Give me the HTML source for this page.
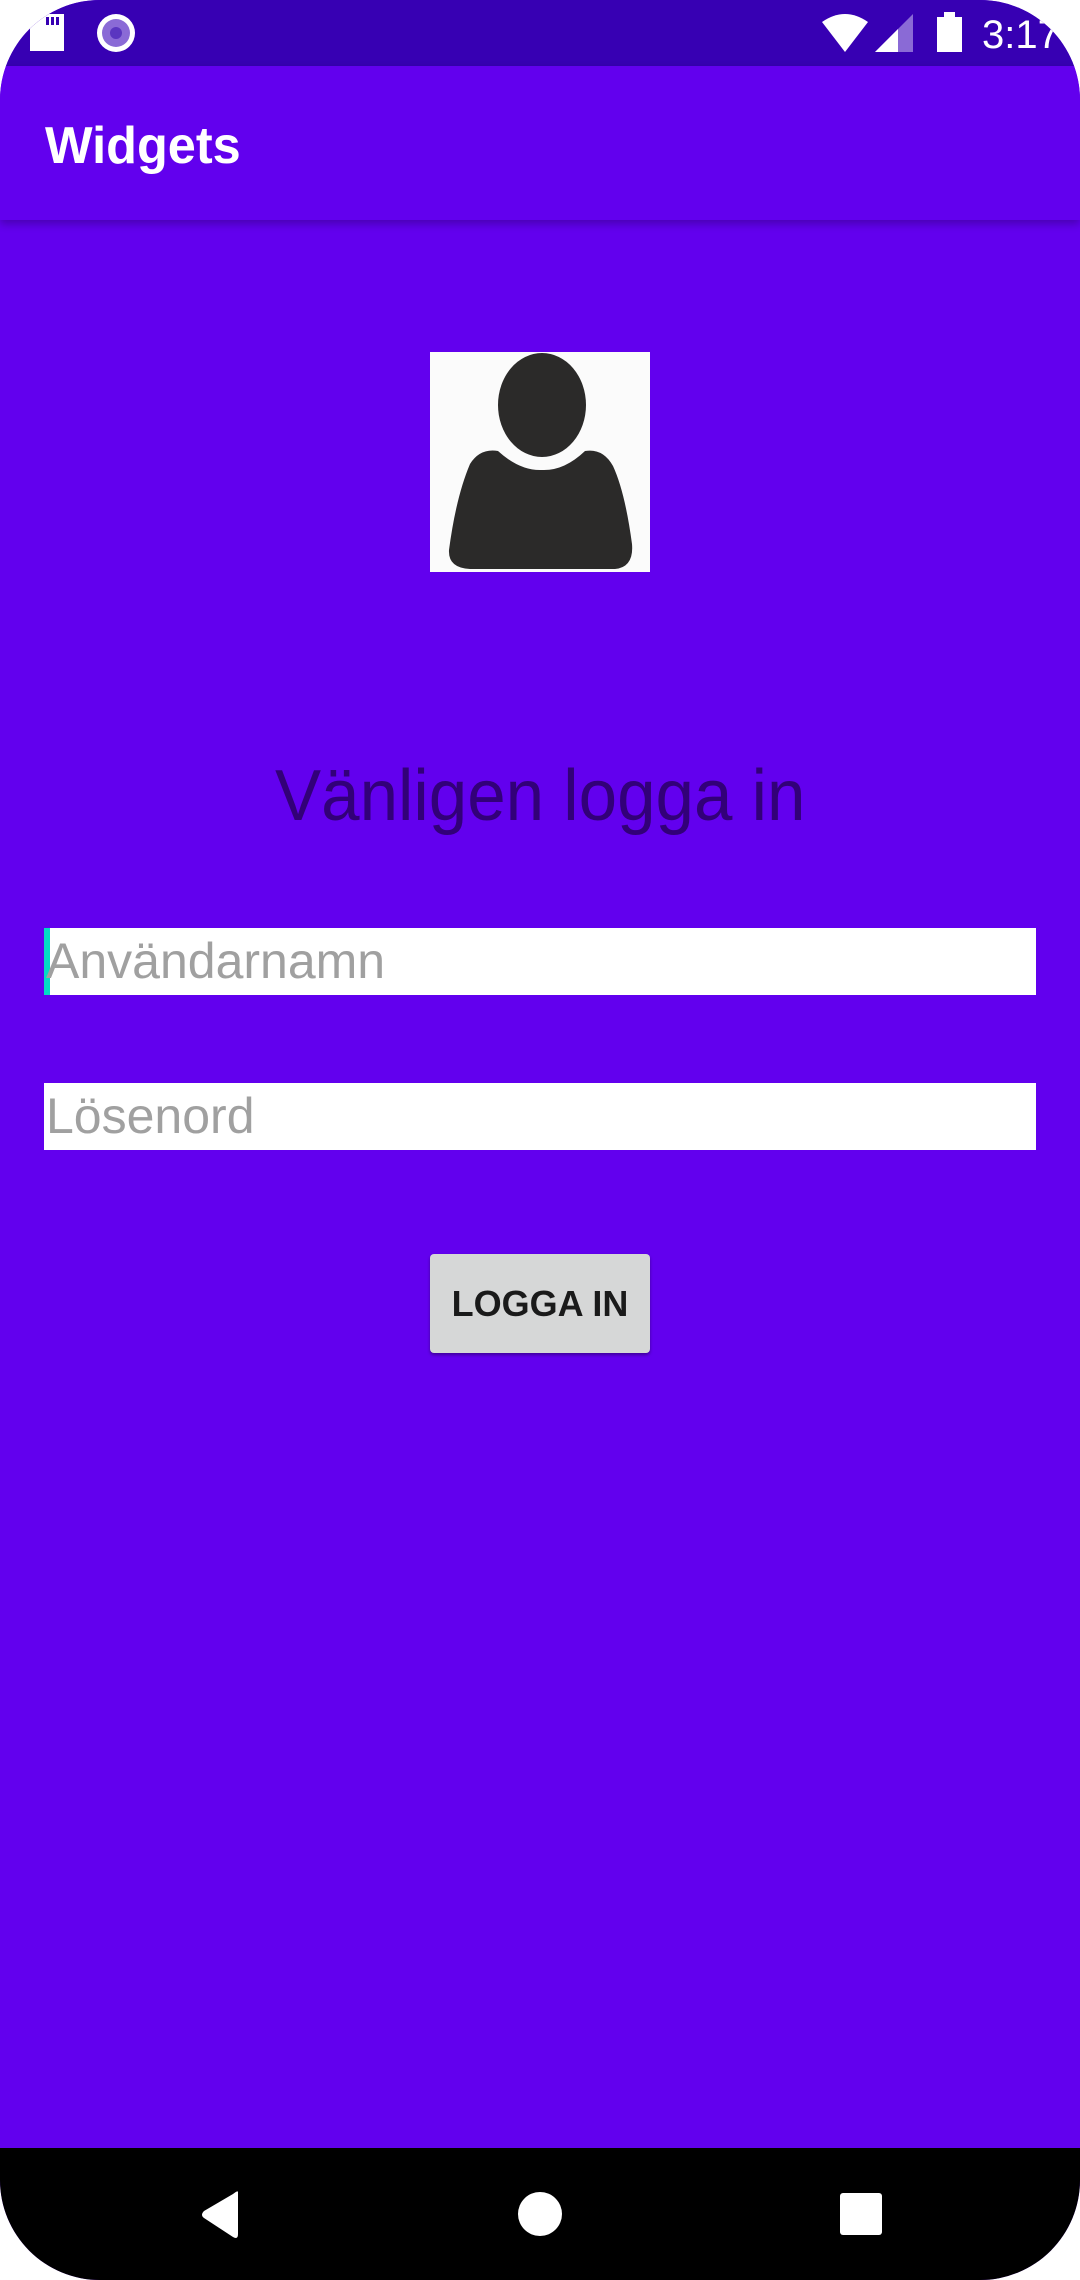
<!DOCTYPE html>
<html><head><meta charset="utf-8"><style>
html,body{margin:0;padding:0;background:#fff;}
body{width:1080px;height:2280px;position:relative;overflow:hidden;font-family:"Liberation Sans",sans-serif;}
.screen{position:absolute;left:0;top:0;width:1080px;height:2280px;border-radius:100px;overflow:hidden;background:#6200EE;}
.status{position:absolute;left:0;top:0;width:1080px;height:66px;background:#3700B3;}
.appbar{position:absolute;left:0;top:66px;width:1080px;height:154px;background:#6200EE;box-shadow:0 4px 8px rgba(0,0,0,0.25);}
.title{position:absolute;left:45px;font-size:52px;color:#fff;font-weight:bold;transform:scaleX(0.97);transform-origin:left;}
.avatar{position:absolute;left:430px;top:352px;width:220px;height:220px;background:#fbfbfb;}
.h{position:absolute;left:0;width:1080px;top:755px;text-align:center;font-size:72px;color:#320078;}
.h span{display:inline-block;transform:scaleX(0.96);}
.field{position:absolute;left:44px;width:992px;height:67px;background:#fff;}
.field span{position:absolute;left:2px;top:4px;font-size:50px;color:#a0a0a0;display:inline-block;}
.btn{position:absolute;left:430px;top:1254px;width:220px;height:99px;background:#d6d7d7;border-radius:4px;box-shadow:0 2px 3px rgba(0,0,0,0.35);text-align:center;line-height:99px;font-size:36px;font-weight:bold;color:#1a1a1a;}
.nav{position:absolute;left:0;top:2148px;width:1080px;height:132px;background:#000;}
</style></head><body>
<div class="screen">
<div class="status">
 <svg width="1080" height="66" style="position:absolute;left:0;top:0">
  <path d="M36 14 h28 v37 h-34 v-31 z" fill="#fff"/>
  <rect x="46" y="17" width="3" height="8" fill="#3700B3"/><rect x="51" y="17" width="3" height="8" fill="#3700B3"/><rect x="56" y="17" width="3" height="8" fill="#3700B3"/>
  <circle cx="116" cy="33" r="19" fill="#fff"/><circle cx="116" cy="33" r="14" fill="#8a6ad6"/><circle cx="116" cy="33" r="6" fill="#5a36c0"/>
  <path d="M822 22 Q845 6 868 22 L845 52 Z" fill="#fff"/>
  <path d="M875 52 L913 14 V52 Z" fill="#8a6ad6"/><path d="M875 52 L898 29 V52 Z" fill="#fff"/>
  <rect x="937" y="17" width="25" height="35" fill="#fff"/><rect x="944" y="12" width="11" height="6" fill="#fff"/>
  <text x="982" y="48" font-size="40" fill="#fff" font-family="Liberation Sans">3:17</text>
 </svg>
</div>
<div class="appbar"><div class="title" style="top:50px">Widgets</div></div>
<div class="avatar">
 <svg width="220" height="220" viewBox="0 0 220 220">
  <ellipse cx="112" cy="53" rx="44" ry="52" fill="#2b2a29"/>
  <path d="M40 112 Q50 96 68 99 Q90 119 112 118 Q134 119 155 99 Q173 96 183 114 Q195 140 202 192 Q204 215 185 217 H40 Q18 216 19 198 Q26 145 40 112 Z" fill="#2b2a29"/>
 </svg>
</div>
<div class="h"><span>Vänligen logga in</span></div>
<div class="field" style="top:928px"><div style="position:absolute;left:0;top:0;width:6px;height:67px;background:#03DAC5"></div><span>Användarnamn</span></div>
<div class="field" style="top:1083px"><span>Lösenord</span></div>
<div class="btn">LOGGA IN</div>
<div class="nav">
 <svg width="1080" height="132">
  <path d="M238 44 L238 86 Q238 92 233 89 L204 70 Q200 67 204 63 L233 46 Q238 42 238 44 Z" fill="#fff"/>
  <circle cx="540" cy="66" r="22" fill="#fff"/>
  <rect x="840" y="45" width="42" height="42" rx="3" fill="#fff"/>
 </svg>
</div>
</div>
</body></html>
